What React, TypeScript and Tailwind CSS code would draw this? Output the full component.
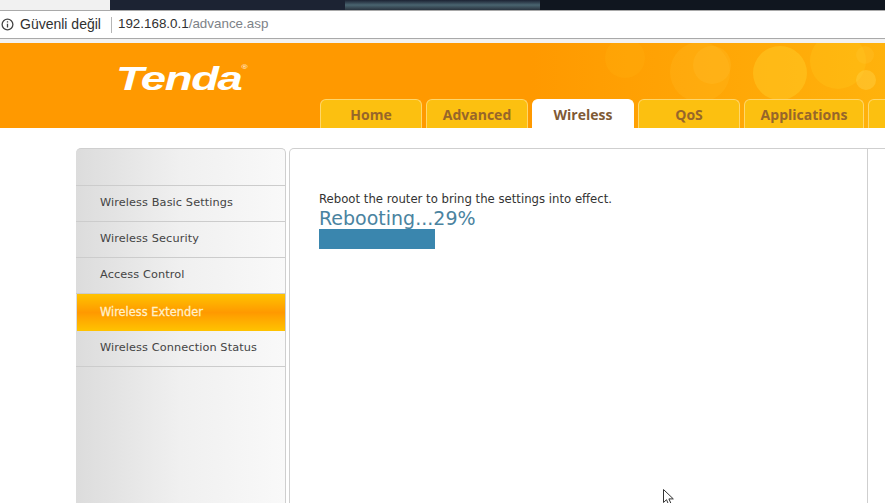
import React from "react";

const tabs = ["Home", "Advanced", "Wireless", "QoS", "Applications"];
const menu = [
  "Wireless Basic Settings",
  "Wireless Security",
  "Access Control",
  "Wireless Extender",
  "Wireless Connection Status",
];

const Bubbles = () => (
  <svg className="absolute right-0 top-0 h-[56px] w-[285px]" viewBox="0 0 285 56" fill="none">
    <circle cx="25" cy="15" r="20" fill="#ffb30f" opacity="0.25" />
    <circle cx="100" cy="29" r="30" fill="#ffc933" opacity="0.18" />
    <circle cx="112" cy="22" r="19" fill="#ffd24d" opacity="0.14" />
    <circle cx="180" cy="30" r="27" fill="#ffd22e" opacity="0.4" />
    <circle cx="238" cy="18" r="28" fill="#ffc91f" opacity="0.3" />
    <circle cx="266" cy="37" r="10" fill="#ffd54a" opacity="0.4" />
    <circle cx="265" cy="12" r="9" fill="#ffc933" opacity="0.25" />
  </svg>
);

const App: React.FC = () => {
  return (
    <div className="relative flex h-[503px] w-[885px] flex-col overflow-hidden bg-white font-['DejaVu_Sans',sans-serif]">
      {/* browser chrome */}
      <div className="flex h-[10px] shrink-0">
        <div className="w-[110px] bg-[#f1f1f1]" />
        <div className="w-[235px] bg-[#1c2333]" />
        <div className="w-[195px] bg-gradient-to-b from-[#1c2333] via-[#4a6570] to-[#2a3540]" />
        <div className="flex-1 bg-[#10161f]" />
      </div>
      <div className="flex h-[29px] shrink-0 items-center border-y border-[#a9a9a9] bg-white pl-[1px]">
        <svg width="13" height="13" viewBox="0 0 14 14" fill="none" stroke="#444" strokeWidth="1.4">
          <circle cx="7" cy="7" r="5.8" />
          <path d="M7 6.2v4M7 3.4v1.5" />
        </svg>
        <span className="ml-[6px] font-['Liberation_Sans',sans-serif] text-[14px] text-[#303030]">Güvenli değil</span>
        <div className="ml-[10px] h-[16px] w-px bg-[#b5b5b5]" />
        <span className="ml-[6px] font-['Liberation_Sans',sans-serif] text-[13.4px] text-[#303030]">
          192.168.0.1<span className="text-[#7d8287]">/advance.asp</span>
        </span>
      </div>
      <div className="h-[4px] shrink-0 bg-[#f2f2f2]" />

      {/* orange header */}
      <div className="relative flex h-[85px] shrink-0 flex-col justify-end bg-gradient-to-r from-[#ff9900] from-60% to-[#ffb20c]">
        <Bubbles />
        <div className="absolute left-[116px] top-[16px] flex origin-left scale-x-[1.38] items-start font-['Liberation_Sans',sans-serif] text-white">
          <span className="text-[33px] leading-[40px] font-bold italic tracking-[-1px]">Tenda</span>
          <span className="mt-[5px] text-[6px] leading-none">®</span>
        </div>
        <div className="relative flex gap-1 pl-[320px] font-['Open_Sans',sans-serif]">
          {tabs.map((t) => (
            <div
              key={t}
              className={
                t === "Wireless"
                  ? "flex h-[29px] w-[102px] shrink-0 items-center justify-center rounded-t-[6px] border border-b-0 border-white bg-white text-[14px] font-bold text-[#7f5a35]"
                  : t === "Applications"
                    ? "flex h-[29px] w-[120px] shrink-0 items-center justify-center rounded-t-[6px] border border-b-0 border-[#ffd76a] bg-[#fcc010] text-[14px] font-bold text-[#97662a]"
                    : "flex h-[29px] w-[102px] shrink-0 items-center justify-center rounded-t-[6px] border border-b-0 border-[#ffd76a] bg-[#fcc010] text-[14px] font-bold text-[#97662a]"
              }
            >
              {t}
            </div>
          ))}
          <div className="h-[29px] w-[30px] shrink-0 rounded-t-[6px] border border-b-0 border-[#ffd76a] bg-[#fcc010]" />
        </div>
      </div>

      {/* body */}
      <div className="flex flex-1 pl-[76px] pt-5">
        <div className="flex h-[400px] w-[210px] shrink-0 flex-col rounded-t-[5px] border-t border-r border-[#cfcfcf] bg-gradient-to-r from-[#dcdcdc] via-[#f0f0f0] via-50% to-[#f9f9f9]">
          <div className="h-[37px] shrink-0 border-b border-[#cccccc]" />
          {menu.map((m) =>
            m === "Wireless Extender" ? (
              <div
                key={m}
                className="ml-px flex h-[37px] shrink-0 items-center bg-gradient-to-b from-[#ffc300] via-[#ff9900] to-[#ffc300] pl-[23px] text-[11.4px] text-[#fff1c9] [-webkit-text-stroke:0.3px_#fff1c9]"
              >
                {m}
              </div>
            ) : (
              <div
                key={m}
                className="flex h-[36px] shrink-0 items-center border-b border-[#cccccc] pl-6 text-[11.3px] tracking-[0.1px] text-[#444444]"
              >
                {m}
              </div>
            ),
          )}
        </div>
        <div className="ml-[3px] flex h-[400px] w-[579px] shrink-0 flex-col rounded-tl-[5px] border-t border-r border-l border-[#cfcfcf] pl-[29px] pt-[43px]">
          <p className="text-[11.7px] leading-[14px] text-[#333333]">Reboot the router to bring the settings into effect.</p>
          <p className="mt-[1px] text-[19px] leading-[22px] text-[#4a83a0]">Rebooting...29%</p>
          <div className="h-5 w-[116px] bg-[#3a86ae]" />
        </div>
        <div className="flex-1 border-t border-[#cfcfcf]" />
      </div>

      {/* mouse pointer */}
      <svg className="absolute left-[663px] top-[489px]" width="13" height="16" viewBox="0 0 13 16" fill="white" stroke="#333" strokeWidth="1">
        <path d="M0.5 0.5v13l3-2.8 2 4.6 2.4-1-2-4.4h4.4z" />
      </svg>
    </div>
  );
};

export default App;
